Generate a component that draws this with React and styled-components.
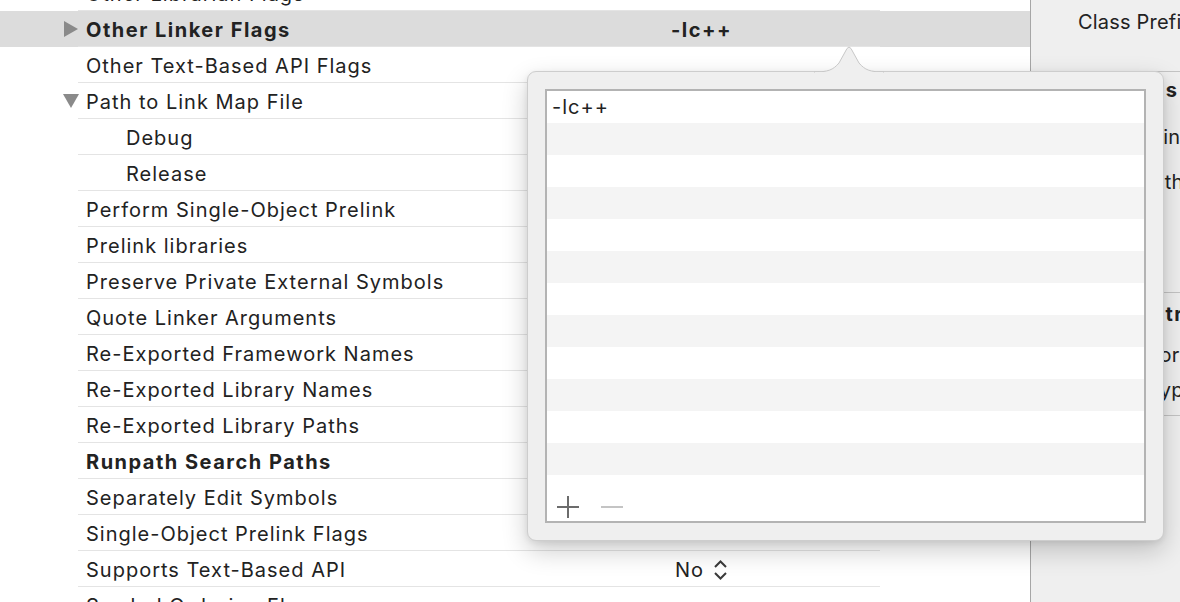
import React from 'react';
import styled, { createGlobalStyle } from 'styled-components';

const GlobalStyle = createGlobalStyle`
  html, body {
    margin: 0;
    padding: 0;
    height: 602px;
    overflow: hidden;
    background: #ffffff;
  }
  body {
    font-family: Inter, "Noto Sans", sans-serif;
    color: #222222;
  }
`;

const Page = styled.div`
  position: relative;
  display: flex;
  width: 1180px;
  height: 602px;
  overflow: hidden;
`;

const SettingsList = styled.div`
  width: 1030px;
  flex-shrink: 0;
  margin-top: -25px;
`;

const Row = styled.div`
  display: flex;
  height: 36px;
  background: ${(p) => (p.$selected ? '#dcdcdc' : 'transparent')};
`;

const Disclosure = styled.div`
  width: 78px;
  flex-shrink: 0;
  display: flex;
  align-items: center;
  justify-content: flex-end;
`;

const Line = styled.div`
  display: flex;
  width: 802px;
  height: 36px;
  box-sizing: border-box;
  border-bottom: 1px solid #e4e4e4;
`;

const Name = styled.div`
  width: 442px;
  padding: 2px 0 0 ${(p) => (p.$indent ? 48 : 8)}px;
  box-sizing: border-box;
  display: flex;
  align-items: center;
  font-size: 20px;
  font-weight: ${(p) => (p.$bold ? 700 : 400)};
  letter-spacing: ${(p) => (p.$bold ? 1.5 : 1)}px;
  white-space: nowrap;
`;

const Value = styled.div`
  flex: 1;
  display: flex;
  align-items: center;
  justify-content: center;
  gap: 9px;
  padding: 2px 0 0 3px;
  font-size: 20px;
  font-weight: ${(p) => (p.$bold ? 700 : 400)};
  letter-spacing: ${(p) => (p.$bold ? 1.5 : 1)}px;
`;

const Inspector = styled.div`
  flex: 1;
  background: #efefef;
  border-left: 1px solid #a6a6a6;
  overflow: hidden;
`;

const InspectorSection = styled.div`
  height: ${(p) => p.$height}px;
  box-sizing: border-box;
  border-bottom: 1px solid #c4c4c4;
  padding-top: ${(p) => p.$top}px;
  display: flex;
  flex-direction: column;
`;

const InspectorText = styled.div`
  margin-top: ${(p) => p.$mt || 0}px;
  padding-left: ${(p) => p.$x}px;
  font-size: 20px;
  line-height: 24px;
  font-weight: ${(p) => (p.$bold ? 700 : 400)};
  letter-spacing: ${(p) => (p.$bold ? 1.5 : 0.2)}px;
  white-space: nowrap;
`;

const Popover = styled.div`
  position: absolute;
  left: 527px;
  top: 71px;
  width: 637px;
  height: 470px;
  box-sizing: border-box;
  padding: 17px;
  background: #efefef;
  border: 1px solid #cdcdcd;
  border-radius: 9px;
  box-shadow: 0 10px 26px rgba(0, 0, 0, 0.2), 0 2px 6px rgba(0, 0, 0, 0.08);
  display: flex;
`;

const Arrow = styled.svg`
  position: absolute;
  left: 286px;
  top: -27px;
  overflow: visible;
`;

const Table = styled.div`
  flex: 1;
  display: flex;
  flex-direction: column;
  border: 2px solid #b3b3b3;
  background: #ffffff;
`;

const TableRow = styled.div`
  height: 32px;
  flex-shrink: 0;
  display: flex;
  align-items: center;
  padding-left: 5px;
  font-size: 20px;
  letter-spacing: 1px;
  background: ${(p) => (p.$odd ? '#f4f4f4' : '#ffffff')};
`;

const TableFooter = styled.div`
  flex: 1;
  display: flex;
  align-items: flex-end;
  gap: 22px;
  padding: 0 0 3px 10px;
`;

const IconButton = styled.svg`
  display: block;
`;

const rows = [
  { name: 'Other Librarian Flags' },
  { name: 'Other Linker Flags', bold: true, selected: true, toggle: 'right', value: '-lc++' },
  { name: 'Other Text-Based API Flags' },
  { name: 'Path to Link Map File', toggle: 'down' },
  { name: 'Debug', indent: true },
  { name: 'Release', indent: true },
  { name: 'Perform Single-Object Prelink' },
  { name: 'Prelink libraries' },
  { name: 'Preserve Private External Symbols' },
  { name: 'Quote Linker Arguments' },
  { name: 'Re-Exported Framework Names' },
  { name: 'Re-Exported Library Names' },
  { name: 'Re-Exported Library Paths' },
  { name: 'Runpath Search Paths', bold: true },
  { name: 'Separately Edit Symbols' },
  { name: 'Single-Object Prelink Flags' },
  { name: 'Supports Text-Based API', value: 'No', popup: true },
  { name: 'Symbol Ordering Flags' },
];

function Triangle({ dir }) {
  if (dir === 'down') {
    return (
      <svg width="16" height="14" viewBox="0 0 16 14" style={{ marginRight: -1 }}>
        <path d="M0 0 H16 L8 14 Z" fill="#8a8a8a" />
      </svg>
    );
  }
  return (
    <svg width="14" height="16" viewBox="0 0 14 16">
      <path d="M0 0 L14 8 L0 16 Z" fill="#8a8a8a" />
    </svg>
  );
}

function UpDown() {
  return (
    <svg width="15" height="22" viewBox="0 0 15 22">
      <path d="M2 8 L7.5 2.5 L13 8" fill="none" stroke="#3a3a3a" strokeWidth="2" />
      <path d="M2 14 L7.5 19.5 L13 14" fill="none" stroke="#3a3a3a" strokeWidth="2" />
    </svg>
  );
}

export default function App() {
  return (
    <>
      <GlobalStyle />
      <Page>
        <SettingsList>
          {rows.map((r) => (
            <Row key={r.name} $selected={r.selected}>
              <Disclosure>{r.toggle && <Triangle dir={r.toggle} />}</Disclosure>
              <Line>
                <Name $bold={r.bold} $indent={r.indent}>{r.name}</Name>
                <Value $bold={r.bold}>
                  {r.value}
                  {r.popup && <UpDown />}
                </Value>
              </Line>
            </Row>
          ))}
        </SettingsList>

        <Inspector>
          <InspectorSection $height={72} $top={10}>
            <InspectorText $x={47}>Class Prefix</InspectorText>
          </InspectorSection>
          <InspectorSection $height={221} $top={6}>
            <InspectorText $x={0} $bold>Text Settings</InspectorText>
            <InspectorText $x={40} $mt={23}>Indent Using</InspectorText>
            <InspectorText $x={96} $mt={21}>Widths</InspectorText>
          </InspectorSection>
          <InspectorSection $height={123} $top={9}>
            <InspectorText $x={6} $bold>Source Control</InspectorText>
            <InspectorText $x={57} $mt={17}>Repository</InspectorText>
            <InspectorText $x={117} $mt={11}>Type</InspectorText>
          </InspectorSection>
        </Inspector>

        <Popover>
          <Arrow width="70" height="30" viewBox="0 0 70 30">
            <path
              d="M0 27 C14 27 19 25 25 18 L33 3.5 Q35 0.5 37 3.5 L45 18 C51 25 56 27 70 27"
              fill="#efefef"
              stroke="#c8c8c8"
              strokeWidth="1"
            />
            <rect x="1" y="27" width="68" height="3" fill="#efefef" />
          </Arrow>
          <Table>
            {Array.from({ length: 12 }).map((_, i) => (
              <TableRow key={i} $odd={i % 2 === 1}>
                {i === 0 ? '-lc++' : ''}
              </TableRow>
            ))}
            <TableFooter>
              <IconButton width="22" height="22" viewBox="0 0 22 22">
                <path d="M11 0 V22 M0 11 H22" stroke="#6c6c6c" strokeWidth="2" />
              </IconButton>
              <IconButton width="22" height="22" viewBox="0 0 22 22">
                <path d="M0 11 H22" stroke="#c4c4c4" strokeWidth="2" />
              </IconButton>
            </TableFooter>
          </Table>
        </Popover>
      </Page>
    </>
  );
}
